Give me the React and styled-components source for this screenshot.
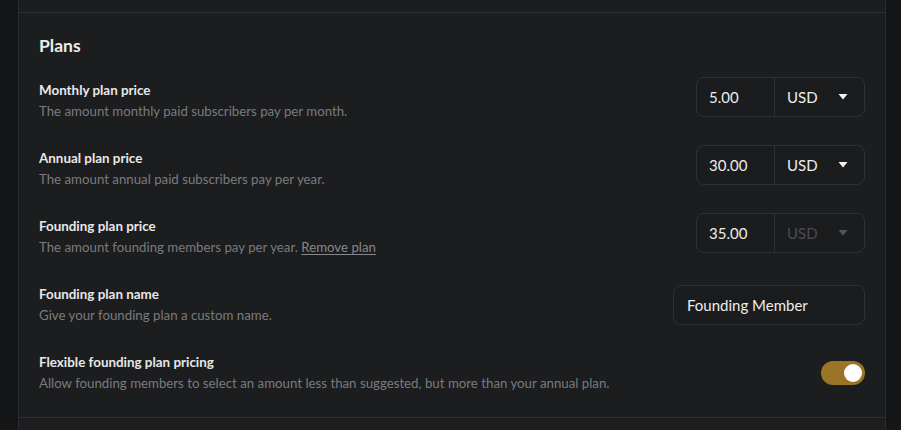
import React, { useState } from "react";
import styled, { createGlobalStyle } from "styled-components";

const GlobalStyle = createGlobalStyle`
  html, body {
    margin: 0;
    padding: 0;
    background: #151618;
    font-family: "Lato", "Liberation Sans", sans-serif;
    -webkit-font-smoothing: antialiased;
  }
`;

const rows = [
  {
    id: "monthly",
    title: "Monthly plan price",
    description: "The amount monthly paid subscribers pay per month.",
    kind: "price",
    value: "5.00",
  },
  {
    id: "annual",
    title: "Annual plan price",
    description: "The amount annual paid subscribers pay per year.",
    kind: "price",
    value: "30.00",
  },
  {
    id: "founding",
    title: "Founding plan price",
    description: "The amount founding members pay per year.",
    link: "Remove plan",
    kind: "price",
    value: "35.00",
    lockedCurrency: true,
  },
  {
    id: "name",
    title: "Founding plan name",
    description: "Give your founding plan a custom name.",
    kind: "text",
    value: "Founding Member",
  },
  {
    id: "flexible",
    title: "Flexible founding plan pricing",
    description:
      "Allow founding members to select an amount less than suggested, but more than your annual plan.",
    kind: "toggle",
  },
];

const Caret = ({ muted }) => (
  <svg width="10" height="6" viewBox="0 0 10 6">
    <path d="M0.5 0 H9.5 L5 5.5 Z" fill={muted ? "#55565a" : "#f2f2f2"} />
  </svg>
);

const App = () => {
  const [flexible, setFlexible] = useState(true);

  return (
    <>
      <GlobalStyle />
      <Page>
        <Card>
          <PrevSection />
          <Section>
            <Heading>Plans</Heading>
            <RowList>
              {rows.map((row) => (
                <Row key={row.id}>
                  <Info>
                    <Title>{row.title}</Title>
                    <Description>
                      {row.description}
                      {row.link && (
                        <>
                          {" "}
                          <Link>{row.link}</Link>
                        </>
                      )}
                    </Description>
                  </Info>

                  {row.kind === "price" && (
                    <PriceField>
                      <Amount>{row.value}</Amount>
                      <Currency muted={row.lockedCurrency}>
                        <span>USD</span>
                        <Caret muted={row.lockedCurrency} />
                      </Currency>
                    </PriceField>
                  )}

                  {row.kind === "text" && <TextField>{row.value}</TextField>}

                  {row.kind === "toggle" && (
                    <Toggle on={flexible} onClick={() => setFlexible(!flexible)}>
                      <Knob on={flexible} />
                    </Toggle>
                  )}
                </Row>
              ))}
            </RowList>
          </Section>
          <NextSection />
        </Card>
      </Page>
    </>
  );
};

/* Styled Components */
const Page = styled.div`
  height: 430px;
  overflow: hidden;
  padding: 0 15px 0 18px;
`;

const Card = styled.div`
  background: #1c1d1f;
  border-left: 1px solid #2b2c2f;
  border-right: 1px solid #2b2c2f;
`;

const PrevSection = styled.div`
  height: 12px;
  border-bottom: 1px solid #2e2f32;
`;

const NextSection = styled.div`
  height: 40px;
  border-top: 1px solid #2e2f32;
`;

const Section = styled.section`
  padding: 21px 20px 24px 20px;
`;

const Heading = styled.h2`
  margin: 0 0 19px;
  font-size: 17.5px;
  line-height: 24px;
  font-weight: 700;
  color: #ececec;
`;

const RowList = styled.div`
  display: flex;
  flex-direction: column;
  gap: 24px;
`;

const Row = styled.div`
  display: flex;
  align-items: flex-start;
  justify-content: space-between;
  gap: 24px;
`;

const Info = styled.div`
  display: flex;
  flex-direction: column;
  gap: 2px;
  padding-top: 4px;
`;

const Title = styled.div`
  font-size: 13.4px;
  line-height: 18px;
  font-weight: 700;
  color: #e8e8e8;
`;

const Description = styled.div`
  font-size: 13.25px;
  line-height: 20px;
  color: #7a7b7e;
`;

const Link = styled.span`
  text-decoration: underline;
  text-underline-offset: 2px;
  color: #86878a;
`;

const PriceField = styled.div`
  display: flex;
  width: 169px;
  height: 40px;
  box-sizing: border-box;
  border: 1px solid #303134;
  border-radius: 8px;
  background: #1b1c1e;
  flex-shrink: 0;
`;

const Amount = styled.div`
  width: 78px;
  display: flex;
  align-items: center;
  padding-left: 12px;
  box-sizing: border-box;
  border-right: 1px solid #303134;
  font-size: 15px;
  color: #ececec;
`;

const Currency = styled.div`
  flex: 1;
  display: flex;
  align-items: center;
  justify-content: space-between;
  padding: 0 16px 0 12px;
  font-size: 15px;
  color: ${({ muted }) => (muted ? "#4b4c50" : "#ececec")};
`;

const TextField = styled.div`
  width: 192px;
  height: 40px;
  margin-top: 4px;
  box-sizing: border-box;
  display: flex;
  align-items: center;
  padding-left: 13px;
  border: 1px solid #303134;
  border-radius: 8px;
  background: #1b1c1e;
  font-size: 15px;
  color: #ececec;
  flex-shrink: 0;
`;

const Toggle = styled.div`
  position: relative;
  width: 44px;
  height: 24px;
  margin-top: 12px;
  border-radius: 12px;
  background: ${({ on }) => (on ? "#9a7427" : "#3a3b3e")};
  cursor: pointer;
  flex-shrink: 0;
`;

const Knob = styled.div`
  position: absolute;
  top: 3px;
  left: ${({ on }) => (on ? "23px" : "3px")};
  width: 18px;
  height: 18px;
  border-radius: 50%;
  background: #ffffff;
`;

export default App;
